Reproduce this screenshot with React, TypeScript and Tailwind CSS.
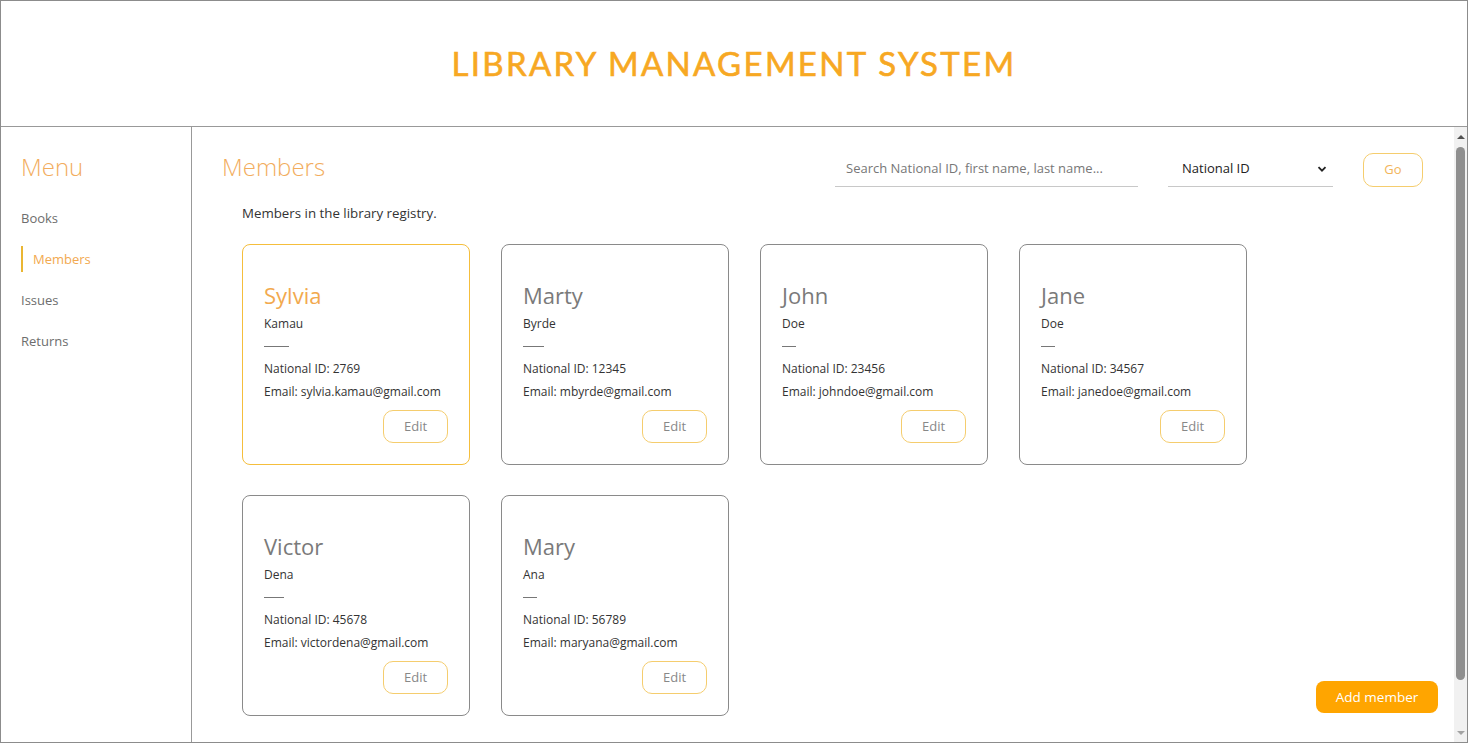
import React from "react";

type Member = {
    first: string;
    last: string;
    nid: string;
    email: string;
    line: string;
};

const members: Member[] = [
    { first: "Sylvia", last: "Kamau", nid: "2769", email: "sylvia.kamau@gmail.com", line: "w-[25px]" },
    { first: "Marty", last: "Byrde", nid: "12345", email: "mbyrde@gmail.com", line: "w-[21px]" },
    { first: "John", last: "Doe", nid: "23456", email: "johndoe@gmail.com", line: "w-[14px]" },
    { first: "Jane", last: "Doe", nid: "34567", email: "janedoe@gmail.com", line: "w-[14px]" },
    { first: "Victor", last: "Dena", nid: "45678", email: "victordena@gmail.com", line: "w-[20px]" },
    { first: "Mary", last: "Ana", nid: "56789", email: "maryana@gmail.com", line: "w-[14px]" },
];

const menu = ["Books", "Members", "Issues", "Returns"];

function MemberCard({ m, active }: { m: Member; active: boolean }) {
    return (
        <div
            className={
                active
                    ? "w-[228px] h-[221px] rounded-lg border border-[#f5be3c] px-[21px] pt-[35px]"
                    : "w-[228px] h-[221px] rounded-lg border border-[#8a8a8a] px-[21px] pt-[35px]"
            }
        >
            <div
                className={
                    active
                        ? "text-[22px] leading-[30px] text-[#f2a94e]"
                        : "text-[22px] leading-[30px] text-[#7a7a7a]"
                }
            >
                {m.first}
            </div>
            <div className="text-[12px] leading-[18px] mt-[5px] text-[#333]">{m.last}</div>
            <div className={`${m.line} h-px bg-[#777] mt-[13px]`} />
            <div className="text-[12px] leading-[18px] mt-[13px] text-[#333]">
                National ID: {m.nid}
            </div>
            <div className="text-[12px] leading-[18px] mt-[5px] text-[#333]">
                Email: {m.email}
            </div>
            <div className="flex justify-end mt-[9px]">
                <button className="w-[65px] h-[33px] rounded-[10px] border border-[#f5cd6e] text-[13px] text-[#888]">
                    Edit
                </button>
            </div>
        </div>
    );
}

function Scrollbar() {
    return (
        <div className="w-[13px] shrink-0 bg-[#f1f1f1] flex flex-col items-center">
            <div className="h-[20px] flex items-center justify-center">
                <div className="w-0 h-0 border-l-[4px] border-r-[4px] border-b-[4px] border-l-transparent border-r-transparent border-b-[#505050]" />
            </div>
            <div className="w-[9px] h-[533px] rounded-full bg-[#8f8f8f]" />
            <div className="flex-1 flex items-end justify-center pb-[7px]">
                <div className="w-0 h-0 border-l-[4px] border-r-[4px] border-t-[4px] border-l-transparent border-r-transparent border-t-[#a3a3a3]" />
            </div>
        </div>
    );
}

export default function App() {
    return (
        <div
            className="h-[743px] w-[1468px] border border-[#8c8c8c] flex flex-col bg-white overflow-hidden"
            style={{ fontFamily: "'Open Sans', 'Liberation Sans', sans-serif" }}
        >
            <header className="h-[126px] shrink-0 border-b border-[#999] flex items-center justify-center">
                <h1
                    className="text-[33px] tracking-[2.3px] text-[#f7a823]"
                    style={{
                        fontFamily: "Lato, 'Liberation Sans', sans-serif",
                        WebkitTextStroke: "0.6px #f7a823",
                    }}
                >
                    LIBRARY MANAGEMENT SYSTEM
                </h1>
            </header>
            <div className="flex flex-1 min-h-0">
                <aside className="w-[191px] shrink-0 border-r border-[#999] pl-[20px] pt-[23px]">
                    <div className="text-[24px] font-light text-[#f2ad5e] leading-[34px]">Menu</div>
                    <ul className="mt-[23px] flex flex-col gap-[19px]">
                        {menu.map((item) =>
                            item === "Members" ? (
                                <li
                                    key={item}
                                    className="border-l-2 border-[#eab632] pl-[10px] text-[13px] leading-[22px] text-[#f2a950] py-[2px] -my-[2px]"
                                >
                                    {item}
                                </li>
                            ) : (
                                <li key={item} className="text-[13px] leading-[22px] text-[#6d6d6d]">
                                    {item}
                                </li>
                            )
                        )}
                    </ul>
                </aside>
                <main className="relative flex-1 min-w-0 flex">
                    <div className="flex-1 min-w-0 overflow-hidden">
                        <div className="pl-[30px] pr-[31px] pt-[25px] pb-[80px]">
                            <div className="flex items-start">
                                <h2 className="text-[24px] font-light text-[#f2ad5e] leading-[30px]">
                                    Members
                                </h2>
                                <div className="ml-auto flex items-center">
                                    <div className="w-[303px] border-b border-[#c8c8c8] h-[35px] flex items-center pl-[11px]">
                                        <span className="text-[13px] text-[#777]">
                                            Search National ID, first name, last name...
                                        </span>
                                    </div>
                                    <div className="ml-[30px] w-[165px] border-b border-[#c8c8c8] h-[35px] flex items-center pl-[14px] pr-[6px]">
                                        <span className="text-[13px] text-[#222]">National ID</span>
                                        <svg
                                            className="ml-auto"
                                            width="10"
                                            height="10"
                                            viewBox="0 0 10 10"
                                        >
                                            <path
                                                d="M1.5 3.2 5 6.7 8.5 3.2"
                                                fill="none"
                                                stroke="#222"
                                                strokeWidth="1.8"
                                            />
                                        </svg>
                                    </div>
                                    <button className="ml-[30px] w-[60px] h-[34px] rounded-[10px] border border-[#f5cd6e] text-[13px] text-[#f2b55a]">
                                        Go
                                    </button>
                                </div>
                            </div>
                            <p className="ml-[20px] mt-[17px] text-[13.3px] leading-[18px] text-[#333]">
                                Members in the library registry.
                            </p>
                            <div className="ml-[20px] mt-[22px] grid grid-cols-[repeat(4,228px)] gap-x-[31px] gap-y-[30px]">
                                {members.map((m, i) => (
                                    <MemberCard key={m.nid} m={m} active={i === 0} />
                                ))}
                            </div>
                        </div>
                    </div>
                    <Scrollbar />
                    <button className="absolute right-[29px] bottom-[29px] w-[122px] h-[32px] rounded-lg bg-[#ffa500] text-white text-[13.5px]">
                        Add member
                    </button>
                </main>
            </div>
        </div>
    );
}
